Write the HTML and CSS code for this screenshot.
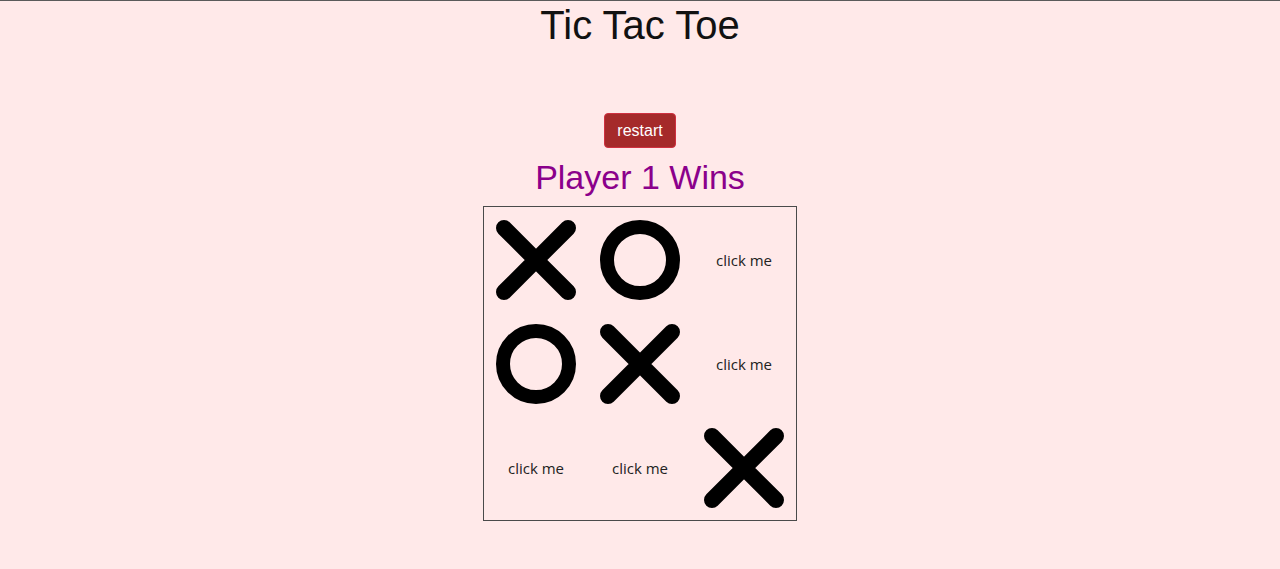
FILE: index.html
```html
<!DOCTYPE html>
<html>
<head>
<meta charset="utf-8">
<link rel="stylesheet" href="styles.css">
</head>
<body>
<div class="page">
  <h1 class="title">Tic Tac Toe</h1>
  <button class="restart">restart</button>
  <div class="status">Player 1 Wins</div>
  <div class="board">
    <div class="cell"><svg class="mark" viewBox="0 0 80 80"><path d="M8 8L72 72M72 8L8 72" stroke="#000" stroke-width="16" stroke-linecap="round" fill="none"/></svg></div>
    <div class="cell"><svg class="mark" viewBox="0 0 80 80"><circle cx="40" cy="40" r="33" stroke="#000" stroke-width="14" fill="none"/></svg></div>
    <div class="cell"><span class="hint">click me</span></div>
    <div class="cell"><svg class="mark" viewBox="0 0 80 80"><circle cx="40" cy="40" r="33" stroke="#000" stroke-width="14" fill="none"/></svg></div>
    <div class="cell"><svg class="mark" viewBox="0 0 80 80"><path d="M8 8L72 72M72 8L8 72" stroke="#000" stroke-width="16" stroke-linecap="round" fill="none"/></svg></div>
    <div class="cell"><span class="hint">click me</span></div>
    <div class="cell"><span class="hint">click me</span></div>
    <div class="cell"><span class="hint">click me</span></div>
    <div class="cell"><svg class="mark" viewBox="0 0 80 80"><path d="M8 8L72 72M72 8L8 72" stroke="#000" stroke-width="16" stroke-linecap="round" fill="none"/></svg></div>
  </div>
</div>
</body>
</html>
```
FILE: styles.css
```css
html, body {
  margin: 0;
  padding: 0;
}
body {
  background: #ffe9e9;
  border-top: 1px solid #5a5a5a;
  height: 568px;
  font-family: "Liberation Sans", Arial, sans-serif;
}
.page {
  display: flex;
  flex-direction: column;
  align-items: center;
}
.title {
  margin: 1px 0 0;
  font-size: 40px;
  font-weight: normal;
  line-height: 46px;
  color: #111;
}
.restart {
  margin-top: 65px;
  width: 72px;
  height: 35px;
  background: #a52a2a;
  border: 1px solid #d03040;
  border-radius: 4px;
  color: #fff;
  font-family: "Liberation Sans", Arial, sans-serif;
  font-size: 16px;
  padding: 0;
}
.status {
  font-size: 34px;
  line-height: 40px;
  color: #8b008b;
  margin-top: 9px;
}
.board {
  margin-top: 9px;
  border: 1px solid #4a4a4a;
  padding-top: 1px;
  display: grid;
  grid-template-columns: repeat(3, 104px);
  grid-template-rows: repeat(3, 104px);
}
.cell {
  display: flex;
  align-items: center;
  justify-content: center;
}
.mark {
  width: 80px;
  height: 80px;
}
.hint {
  font-family: "Open Sans", "Noto Sans", sans-serif;
  font-size: 15px;
  color: #222;
}
```
